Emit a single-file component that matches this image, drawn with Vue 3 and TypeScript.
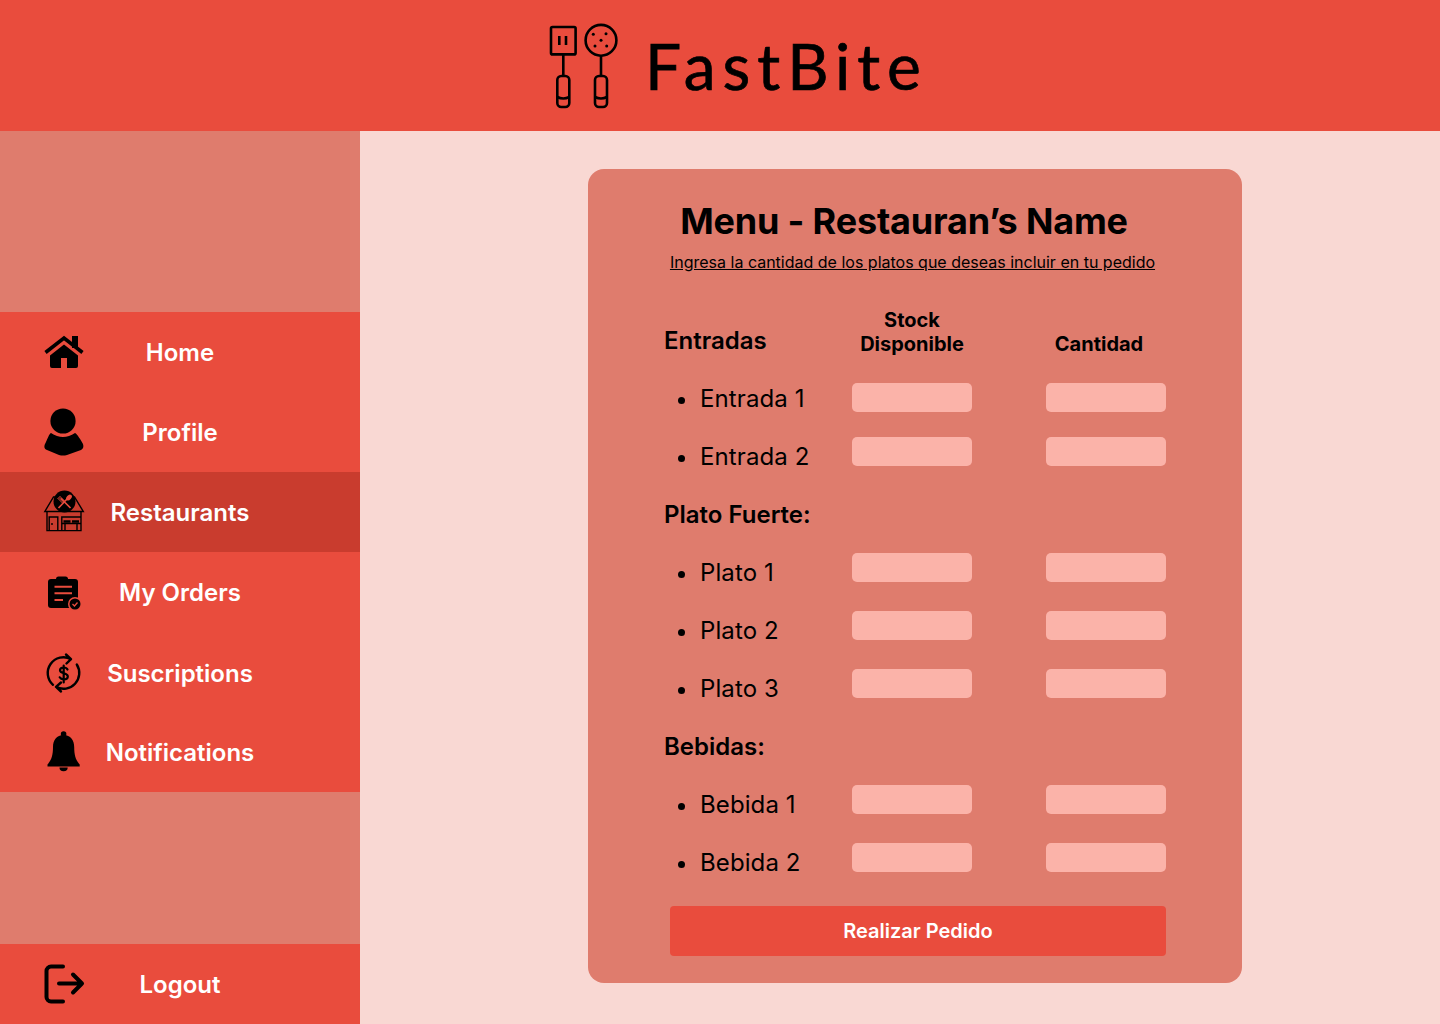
<script setup lang="ts">
type Row = { kind: 'head' | 'item'; label: string }

const navItems = [
  { id: 'home', label: 'Home' },
  { id: 'profile', label: 'Profile' },
  { id: 'restaurants', label: 'Restaurants', active: true },
  { id: 'orders', label: 'My Orders' },
  { id: 'subs', label: 'Suscriptions' },
  { id: 'bell', label: 'Notifications' },
]

const rows: Row[] = [
  { kind: 'item', label: 'Entrada 1' },
  { kind: 'item', label: 'Entrada 2' },
  { kind: 'head', label: 'Plato Fuerte:' },
  { kind: 'item', label: 'Plato 1' },
  { kind: 'item', label: 'Plato 2' },
  { kind: 'item', label: 'Plato 3' },
  { kind: 'head', label: 'Bebidas:' },
  { kind: 'item', label: 'Bebida 1' },
  { kind: 'item', label: 'Bebida 2' },
]
</script>

<template>
  <div class="app">
    <header class="topbar">
      <svg class="logo-mark" width="80" height="90" viewBox="0 0 80 90" fill="none" stroke="#000" stroke-width="2.6">
        <rect x="6" y="6" width="24.6" height="27.4" rx="1.5" />
        <path d="M14.3 15v9M21 15v9M18.3 33.4V55" />
        <rect x="12.3" y="55" width="12" height="31" rx="4" />
        <path d="M12.3 76q6 3 12 0" />
        <circle cx="56" cy="19.3" r="15.4" />
        <path d="M56 35v20" />
        <rect x="50" y="55" width="12" height="31" rx="4" />
        <path d="M50 76q6 3 12 0" />
        <g fill="#000" stroke="none">
          <circle cx="48.3" cy="13.3" r="1.5" />
          <circle cx="61" cy="12.7" r="1.5" />
          <circle cx="56" cy="19.3" r="1.5" />
          <circle cx="50" cy="25" r="1.5" />
          <circle cx="61.7" cy="25" r="1.5" />
        </g>
      </svg>
      <span class="brand">FastBite</span>
    </header>

    <div class="body">
      <aside class="sidebar">
        <div class="side-blank top"></div>
        <nav class="nav">
          <a v-for="item in navItems" :key="item.id" class="nav-item" :class="[item.id, { active: item.active }]">
            <svg v-if="item.id === 'home'" class="nav-icon" width="40" height="40" viewBox="0 0 40 40">
              <rect x="28" y="4" width="6" height="12" />
              <path d="M1.5 20.5 20 6l18.5 14.5" fill="none" stroke="#000" stroke-width="3.6" />
              <path d="M6 23.5 20 12.5l14 11V34a2 2 0 0 1-2 2H23V26h-6v10H8a2 2 0 0 1-2-2z" />
            </svg>
            <svg v-else-if="item.id === 'profile'" class="nav-icon" width="40" height="48" viewBox="0 0 40 48">
              <circle cx="19" cy="13" r="12.6" />
              <path d="M7 25q12 8 24 0c2 1 6 7 8 11 1 3 0 5-2 6l-14 5q-4 1-8 0L3 42c-3-1-3-4-2-6 2-4 4-10 6-11z" />
            </svg>
            <svg v-else-if="item.id === 'restaurants'" class="nav-icon" width="40" height="40" viewBox="0 0 40 40" fill="none" stroke="#000" stroke-width="1.4">
              <path d="M.8 19.5 9.5 5h21l8.8 14.5z" />
              <path d="M3 19.5V38.6h34V19.5" />
              <path d="M5.2 38.6V25h8.6v13.6M17.8 38.6V25H37M8 31v2" />
              <path d="M17.8 31.500H37M21 31.500v7M33 31.500v7" />
              <path d="M19.500 29.500h7M28 29.500h7" stroke-width="2.400" />
              <circle cx="20.500" cy="9.500" r="11" fill="#000" stroke="none" />
              <g stroke="#e94c3d">
                <path d="m14.500 16 9-9.500M26.500 16 17 6.500" stroke-width="1.700" />
                <path d="m13.500 6 5 5M15.500 4l5 5M14.500 5l5 5" stroke-width="1" />
              </g>
              <ellipse cx="25" cy="5.500" rx="2.300" ry="3.400" transform="rotate(42 25 5.500)" fill="#e94c3d" stroke="none" />
            </svg>
            <svg v-else-if="item.id === 'orders'" class="nav-icon" width="40" height="40" viewBox="0 0 40 40">
              <rect x="4" y="7" width="30" height="29" rx="3" />
              <rect x="12" y="4.500" width="12" height="5" rx="2.500" />
              <path d="M10.500 14.700H28M10.500 21.300H28M10.500 28H19" stroke="#e94c3d" stroke-width="2" />
              <circle cx="31" cy="32" r="7" fill="#e94c3d" />
              <circle cx="31" cy="32" r="5.500" />
              <path d="m28.500 32 2 2 3-3.500" fill="none" stroke="#e94c3d" stroke-width="1.300" />
            </svg>
            <svg v-else-if="item.id === 'subs'" class="nav-icon" width="40" height="40" viewBox="0 -1 40 40" fill="none" stroke="#000" stroke-width="2.400" stroke-linecap="round" stroke-linejoin="round">
              <path d="M9 31.800A15.800 15.800 0 0 1 27 6.100M22 1.500l5 4.600-4.500 4.400" />
              <path d="M32.800 11.500A15.800 15.800 0 0 1 12 33.900M17 29.500l-5 4.400 5 4.600" />
              <path d="M23.500 16.500c-.6-1.300-2-2-3.800-2-2.300 0-3.700 1.100-3.700 2.800 0 3.900 7.800 2.100 7.800 6.100 0 1.800-1.600 2.900-4 2.900-2 0-3.400-.7-4.100-2M19.700 12.500v17" stroke-width="2.200" />
            </svg>
            <svg v-else class="nav-icon" width="40" height="44" viewBox="0 0 40 44">
              <circle cx="19.600" cy="4" r="2.800" />
              <path d="M19.600 5c-7 0-10.600 5-10.600 12 0 8-1.400 13-5.500 17.500v2h32.200v-2C31.600 30 30.200 25 30.200 17c0-7-3.600-12-10.600-12z" />
              <path d="M15.500 37.500h8.200a4.100 3.800 0 0 1-8.200 0z" />
            </svg>
            <span class="nav-label">{{ item.label }}</span>
          </a>
        </nav>
        <div class="side-blank bottom"></div>
        <a class="nav-item">
          <svg class="nav-icon" width="40" height="40" viewBox="0 0 40 40" fill="none" stroke="#000" stroke-width="4" stroke-linecap="round" stroke-linejoin="round">
            <path d="M19 2.500H7a4.500 4.500 0 0 0-4.500 4.500v26A4.500 4.500 0 0 0 7 37.500h12" />
            <path d="M15 19.500h23M29 10.500l9 9-9 9" />
          </svg>
          <span class="nav-label">Logout</span>
        </a>
      </aside>

      <main class="content">
        <section class="card">
          <h1 class="title">Menu - Restauran’s Name</h1>
          <p class="subtitle">Ingresa la cantidad de los platos que deseas incluir en tu pedido</p>

          <div class="table-head">
            <span class="section-label first">Entradas</span>
            <span class="col-label">Stock<br />Disponible</span>
            <span class="col-label qty">Cantidad</span>
          </div>

          <div v-for="(row, i) in rows" :key="row.label" class="row" :class="{ 'row-first': i === 0 }">
            <span v-if="row.kind === 'head'" class="section-label">{{ row.label }}</span>
            <template v-else>
              <span class="item"><i class="dot"></i>{{ row.label }}</span>
              <input class="field" type="text" />
              <input class="field" type="text" />
            </template>
          </div>

          <button class="submit" type="button">Realizar Pedido</button>
        </section>
      </main>
    </div>
  </div>
</template>

<style scoped>
.app {
  width: 1440px;
  height: 1024px;
  display: flex;
  flex-direction: column;
  font-family: Inter, "Liberation Sans", sans-serif;
  color: #000;
  background: #f9d8d3;
}

.topbar {
  height: 131px;
  flex-shrink: 0;
  background: #e94c3d;
  display: flex;
  align-items: center;
  justify-content: center;
  padding-left: 33px;
  box-sizing: border-box;
}

.logo-mark {
  margin-right: 20px;
}

.brand {
  font-family: Lato, Inter, sans-serif;
  font-size: 64px;
  font-weight: 400;
  letter-spacing: 7px;
  line-height: 70px;
  -webkit-text-stroke: 0.7px #000;
}

.body {
  flex: 1;
  display: flex;
  min-height: 0;
}

.sidebar {
  width: 360px;
  flex-shrink: 0;
  display: flex;
  flex-direction: column;
  background: #df7c6d;
}

.side-blank.top {
  height: 181px;
}

.side-blank.bottom {
  flex: 1;
}

.nav-item {
  height: 80px;
  background: #e94c3d;
  display: grid;
  grid-template-columns: 1fr auto 1fr;
  align-items: center;
}

.nav-item.active {
  background: #c93c2e;
}

.nav-icon {
  margin-left: 44px;
  display: block;
  overflow: visible;
}

.nav-label {
  font-size: 24px;
  font-weight: 600;
  color: #fff;
  line-height: 32px;
  padding-top: 2px;
}

.subs .nav-label {
  padding-top: 3px;
}

.content {
  flex: 1;
  padding: 38px 198px 41px 228px;
  box-sizing: border-box;
}

.card {
  height: 814px;
  box-sizing: border-box;
  background: #df7c6d;
  border-radius: 16px;
  padding: 30px 76px 27px;
}

.title {
  margin: 0;
  padding-right: 22px;
  font-size: 36px;
  line-height: 44px;
  font-weight: 700;
  letter-spacing: -0.18px;
  text-align: center;
}

.subtitle {
  margin: 10px 0 0;
  padding-right: 5px;
  font-size: 16px;
  line-height: 18px;
  text-align: center;
  text-decoration: underline;
}

.table-head {
  margin-top: 37px;
  margin-bottom: 14px;
  height: 48px;
  display: grid;
  grid-template-columns: 188px 194px 120px;
  grid-template-rows: 48px;
}

.section-label {
  font-size: 24px;
  font-weight: 600;
  line-height: 58px;
}

.section-label.first {
  line-height: 66px;
  align-self: start;
  height: 48px;
}

.col-label {
  width: 120px;
  box-sizing: border-box;
  font-size: 20px;
  font-weight: 700;
  line-height: 24px;
  text-align: center;
  align-self: end;
}

.col-label.qty {
  padding-right: 14px;
}

.row {
  height: 58px;
  display: grid;
  grid-template-columns: 188px 194px 120px;
}

.item {
  display: flex;
  align-items: center;
  font-size: 24px;
  line-height: 58px;
  letter-spacing: 0.1px;
}

.dot {
  width: 7px;
  height: 7px;
  border-radius: 50%;
  background: #000;
  margin: 2px 15px 0 14px;
}

.field {
  width: 120px;
  height: 29px;
  margin-top: 9px;
  padding: 0;
  border: none;
  border-radius: 5px;
  background: #fbb3a9;
}

.row-first .field {
  margin-top: 13px;
}

.submit {
  display: block;
  width: 496px;
  height: 50px;
  margin: 14px 0 0 6px;
  border: none;
  border-radius: 4px;
  background: #e94c3d;
  color: #fff;
  font-family: inherit;
  font-size: 20px;
  font-weight: 600;
}
</style>
